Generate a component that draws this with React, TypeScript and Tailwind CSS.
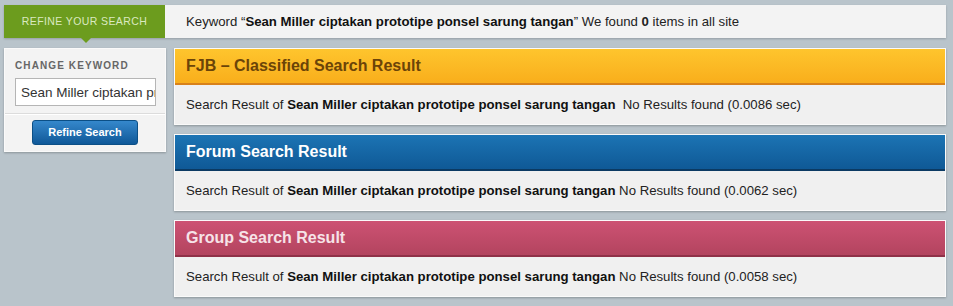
import React from "react";

const kw = "Sean Miller ciptakan prototipe ponsel sarung tangan";

function Card({
  title,
  headerCls,
  titleCls,
  time,
  gap,
}: {
  title: string;
  headerCls: string;
  titleCls: string;
  time: string;
  gap: boolean;
}) {
  return (
    <div className="flex h-[77px] flex-col border border-[#fafafa] bg-[#f0f0f0] shadow-[0_1px_2px_rgba(0,0,0,0.25)]">
      <div className={`flex h-[36px] items-center px-[11px] ${headerCls}`}>
        <span className={`text-[16px] font-bold ${titleCls}`}>{title}</span>
      </div>
      <div className="flex flex-1 items-center px-[11px] text-[13.2px] text-[#222]">
        <span>
          Search Result of <b className="text-[#111]">{kw}</b>
          {gap ? "\u00a0 " : " "}No Results found ({time})
        </span>
      </div>
    </div>
  );
}

export default function App() {
  return (
    <div
      className="h-[306px] w-[953px] overflow-hidden bg-[#b9c4cb] pl-[4px] pr-[7px] pt-[5px]"
      style={{ fontFamily: '"Liberation Sans", Arial, sans-serif' }}
    >
      <div className="flex h-[33px] shadow-[0_1px_2px_rgba(0,0,0,0.2)]">
        <div className="relative flex w-[161px] items-center justify-center bg-[#6c9c1e] text-[10.5px] tracking-[0.4px] text-[#dbe9c0]">
          REFINE YOUR SEARCH
          <div className="absolute left-[77px] top-[33px] h-0 w-0 border-l-[5px] border-r-[5px] border-t-[5px] border-l-transparent border-r-transparent border-t-[#6c9c1e]" />
        </div>
        <div className="flex flex-1 items-center bg-[#f3f3f3] pl-[21px] text-[13.2px] text-[#222]">
          <span>
            Keyword &ldquo;<b className="text-[#111]">{kw}</b>&rdquo; We found <b>0</b> items in all site
          </span>
        </div>
      </div>

      <div className="mt-[10px] flex gap-[8px]">
        <div className="flex h-[104px] w-[162px] flex-col border border-[#fafafa] bg-[#f3f3f3] shadow-[0_1px_2px_rgba(0,0,0,0.25)]">
          <div className="px-[10px] pt-[9px]">
            <div className="text-[10px] font-bold tracking-[1.1px] text-[#666]">CHANGE KEYWORD</div>
            <input
              readOnly
              value={kw}
              className="mt-[5px] block h-[28px] w-[141px] border border-[#b5b5b5] bg-white pl-[5px] text-[13.5px] text-[#333] outline-none"
              style={{ fontFamily: '"Liberation Sans", Arial, sans-serif' }}
            />
          </div>
          <div className="mt-[7px] border-t border-[#dcdcdc] shadow-[0_1px_0_#fff]" />
          <div className="flex flex-1 items-center justify-center">
            <div className="flex h-[25px] w-[106px] items-center justify-center rounded-[3px] border border-[#0b4f86] bg-gradient-to-b from-[#3588cc] to-[#0e5898] text-[11px] font-bold text-white">
              Refine Search
            </div>
          </div>
        </div>

        <div className="flex flex-1 flex-col gap-[9px]">
          <Card
            title="FJB – Classified Search Result"
            headerCls="bg-gradient-to-b from-[#fec52d] to-[#f9ae1b] border-b-2 border-[#d8811a]"
            titleCls="text-[#6b4408]"
            time="0.0086 sec"
            gap={true}
          />
          <Card
            title="Forum Search Result"
            headerCls="bg-gradient-to-b from-[#1c74b4] to-[#0f5996] border-b-2 border-[#0b3a63]"
            titleCls="text-white"
            time="0.0062 sec"
            gap={false}
          />
          <Card
            title="Group Search Result"
            headerCls="bg-gradient-to-b from-[#cd5273] to-[#b3445f] border-b-2 border-[#8f3148]"
            titleCls="text-[#f6e3e8]"
            time="0.0058 sec"
            gap={false}
          />
        </div>
      </div>
    </div>
  );
}
